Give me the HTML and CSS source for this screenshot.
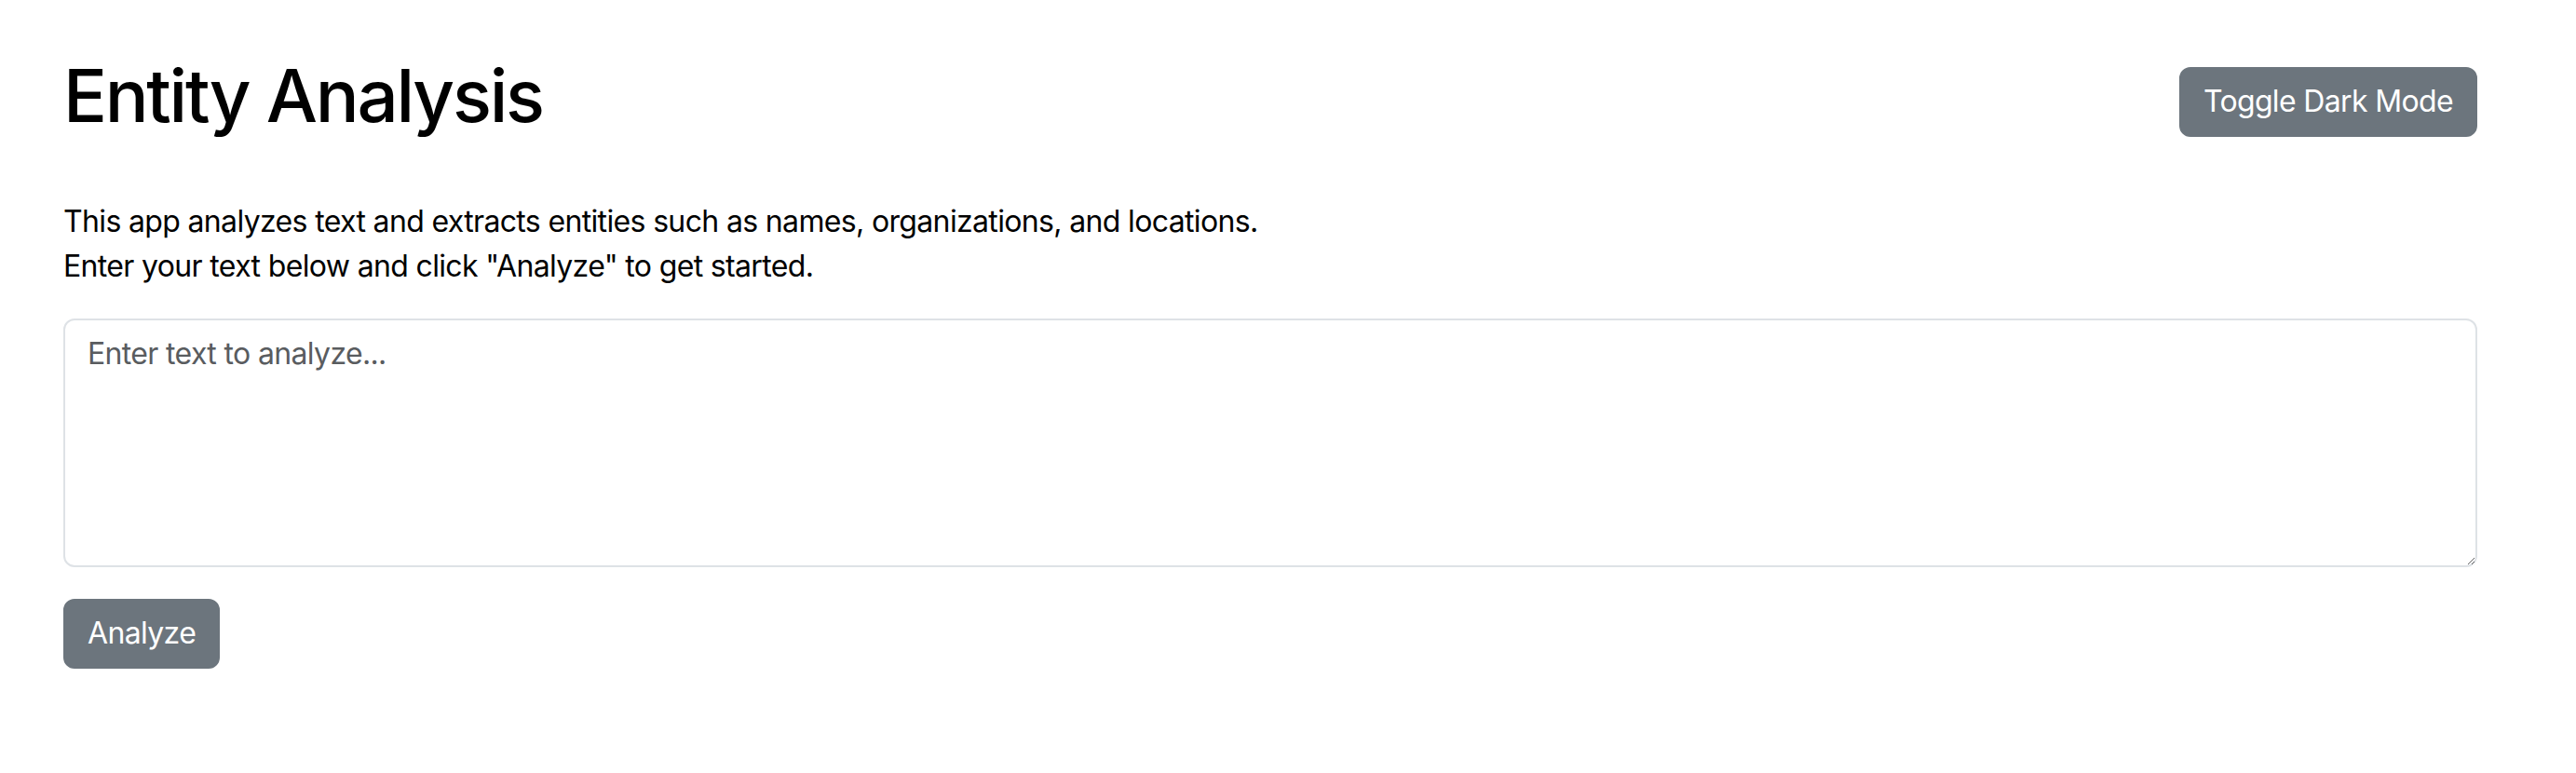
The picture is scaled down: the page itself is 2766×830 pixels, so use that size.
FILE: index.html
```html
<!DOCTYPE html>
<html lang="en">
<head>
<meta charset="utf-8">
<title>Entity Analysis</title>
<link rel="stylesheet" href="styles.css">
</head>
<body>
<main class="container">
  <header class="header">
    <h1 class="title">Entity Analysis</h1>
    <button class="btn toggle-btn" type="button">Toggle Dark Mode</button>
  </header>
  <p class="intro">This app analyzes text and extracts entities such as names, organizations, and locations.<br>Enter your text below and click "Analyze" to get started.</p>
  <textarea class="text-input" placeholder="Enter text to analyze..."></textarea>
  <div class="actions">
    <button class="btn analyze-btn" type="button">Analyze</button>
  </div>
</main>
</body>
</html>
```
FILE: styles.css
```css
html, body {
  margin: 0;
  padding: 0;
  background: #ffffff;
}

body {
  font-family: Inter, "Liberation Sans", Arial, sans-serif;
  font-size: 32px;
  line-height: 1.5;
  letter-spacing: -0.65px;
  color: #000000;
}

.container {
  padding: 55px 106px 0 68px;
}

.header {
  display: flex;
  justify-content: space-between;
  align-items: flex-start;
}

.title {
  margin: 0;
  font-size: 78px;
  font-weight: 500;
  line-height: 96px;
  letter-spacing: -2.3px;
}

.btn {
  font-family: inherit;
  font-size: 32px;
  line-height: 48px;
  letter-spacing: -0.65px;
  color: #ffffff;
  background: #6c757d;
  border: 2px solid #6c757d;
  border-radius: 12px;
  padding: 11px 24px 12px;
  cursor: pointer;
}

.toggle-btn {
  margin-top: 17px;
}

.intro {
  margin: 63px 0 32px;
  line-height: 48px;
}

.text-input {
  display: block;
  box-sizing: border-box;
  width: 100%;
  height: 267px;
  margin: 0;
  padding: 12px 24px;
  font-family: inherit;
  font-size: 32px;
  line-height: 48px;
  letter-spacing: -0.65px;
  color: #212529;
  background: #ffffff;
  border: 2px solid #dee2e6;
  border-radius: 12px;
  outline: none;
}

.text-input::placeholder {
  color: #595c5f;
}

.actions {
  margin-top: 34px;
}
```
